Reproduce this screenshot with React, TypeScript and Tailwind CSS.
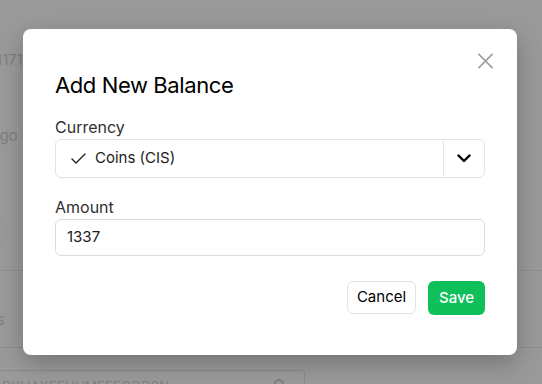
import React from "react";

function Background() {
  return (
    <div className="h-full w-full overflow-hidden text-[#7f7f7f]" style={{ fontFamily: "Inter, 'Liberation Sans', sans-serif" }}>
      <div className="h-[51px]" />
      <div className="-ml-[10px] text-[15px] leading-[18px] whitespace-nowrap">11171</div>
      <div className="h-[58px]" />
      <div className="-ml-[9px] text-[15px] leading-[18px] whitespace-nowrap">ago</div>
      <div className="h-[72px]" />
      <div className="-ml-[30px] h-[31px] w-[34px] rounded-md border border-[#a88f92]" />
      <div className="h-[22px]" />
      <div className="border-t border-[#8e8e8e]" />
      <div className="h-[40px]" />
      <div className="-ml-[8px] text-[15px] leading-[18px] whitespace-nowrap">ts</div>
      <div className="h-[18px]" />
      <div className="border-t border-[#8e8e8e]" />
      <div className="h-[22px]" />
      <div className="flex h-[30px] w-[305px] items-start justify-between rounded-tr border-r border-t border-[#8a8a8a] pl-[2px] pr-[20px] pt-[8px] text-[13px] leading-[14px]">
        <span className="tracking-wide whitespace-nowrap">DYHAKEEHHMEEEGDD9N</span>
        <span className="h-[12px] w-[10px] rounded-t-full border-2 border-b-0 border-[#7f7f7f]" />
      </div>
    </div>
  );
}

export default function App() {
  return (
    <div className="relative h-[384px] w-[542px] overflow-hidden bg-[#9a9a9a]">
      <Background />
      <div className="absolute inset-0 flex items-center pl-[23px]">
        <div
          className="relative flex h-[326px] w-[494px] flex-col rounded-lg bg-white px-8 pt-[42px] shadow-[0_8px_24px_rgba(0,0,0,0.25)]"
          style={{ fontFamily: "Inter, 'Liberation Sans', sans-serif" }}
        >
          <button className="absolute right-[24px] top-[24px] flex h-[15px] w-[15px] items-center justify-center text-[#a0a0a0]">
            <svg width="16" height="16" viewBox="0 0 16 16" fill="none" stroke="currentColor" strokeWidth="1.8" strokeLinecap="round">
              <path d="M1 1L15 15M15 1L1 15" />
            </svg>
          </button>
          <h2 className="text-[22px] leading-[28px] font-normal tracking-[-0.4px] text-black">Add New Balance</h2>
          <div className="h-[16px]" />
          <label className="text-[16px] leading-[24px] text-[#2f2f2f]">Currency</label>
          <div className="flex h-[39px] items-stretch rounded-md border border-[#e3e3e3]">
            <div className="flex flex-1 items-center pl-[15px] text-[15px] text-[#1a1a1a]">
              <svg width="15" height="11" viewBox="0 0 15 11" fill="none" stroke="#222" strokeWidth="1.4" strokeLinecap="round" strokeLinejoin="round">
                <path d="M1 6L5 10L14 1" />
              </svg>
              <span className="ml-[9px]">Coins (CIS)</span>
            </div>
            <div className="my-[1px] w-px bg-[#e3e3e3]" />
            <div className="flex w-[40px] items-center justify-center">
              <svg width="14" height="9" viewBox="0 0 14 9" fill="none" stroke="#000" strokeWidth="2.4" strokeLinecap="round" strokeLinejoin="round">
                <path d="M1.5 1.5L7 7L12.5 1.5" />
              </svg>
            </div>
          </div>
          <div className="h-[17px]" />
          <label className="text-[16px] leading-[24px] text-[#2f2f2f]">Amount</label>
          <div className="flex h-[37px] items-center rounded-md border border-[#dcdcdc] pl-[11px] text-[15px] text-[#1a1a1a]">
            1337
          </div>
          <div className="h-[25px]" />
          <div className="flex justify-end gap-[12px]">
            <button className="h-[33px] w-[69px] rounded-md border border-[#e3e3e3] bg-white text-[15px] text-black">Cancel</button>
            <button className="h-[34px] w-[57px] rounded-md bg-[#0fbf59] text-[15px] font-medium text-white">Save</button>
          </div>
        </div>
      </div>
    </div>
  );
}
